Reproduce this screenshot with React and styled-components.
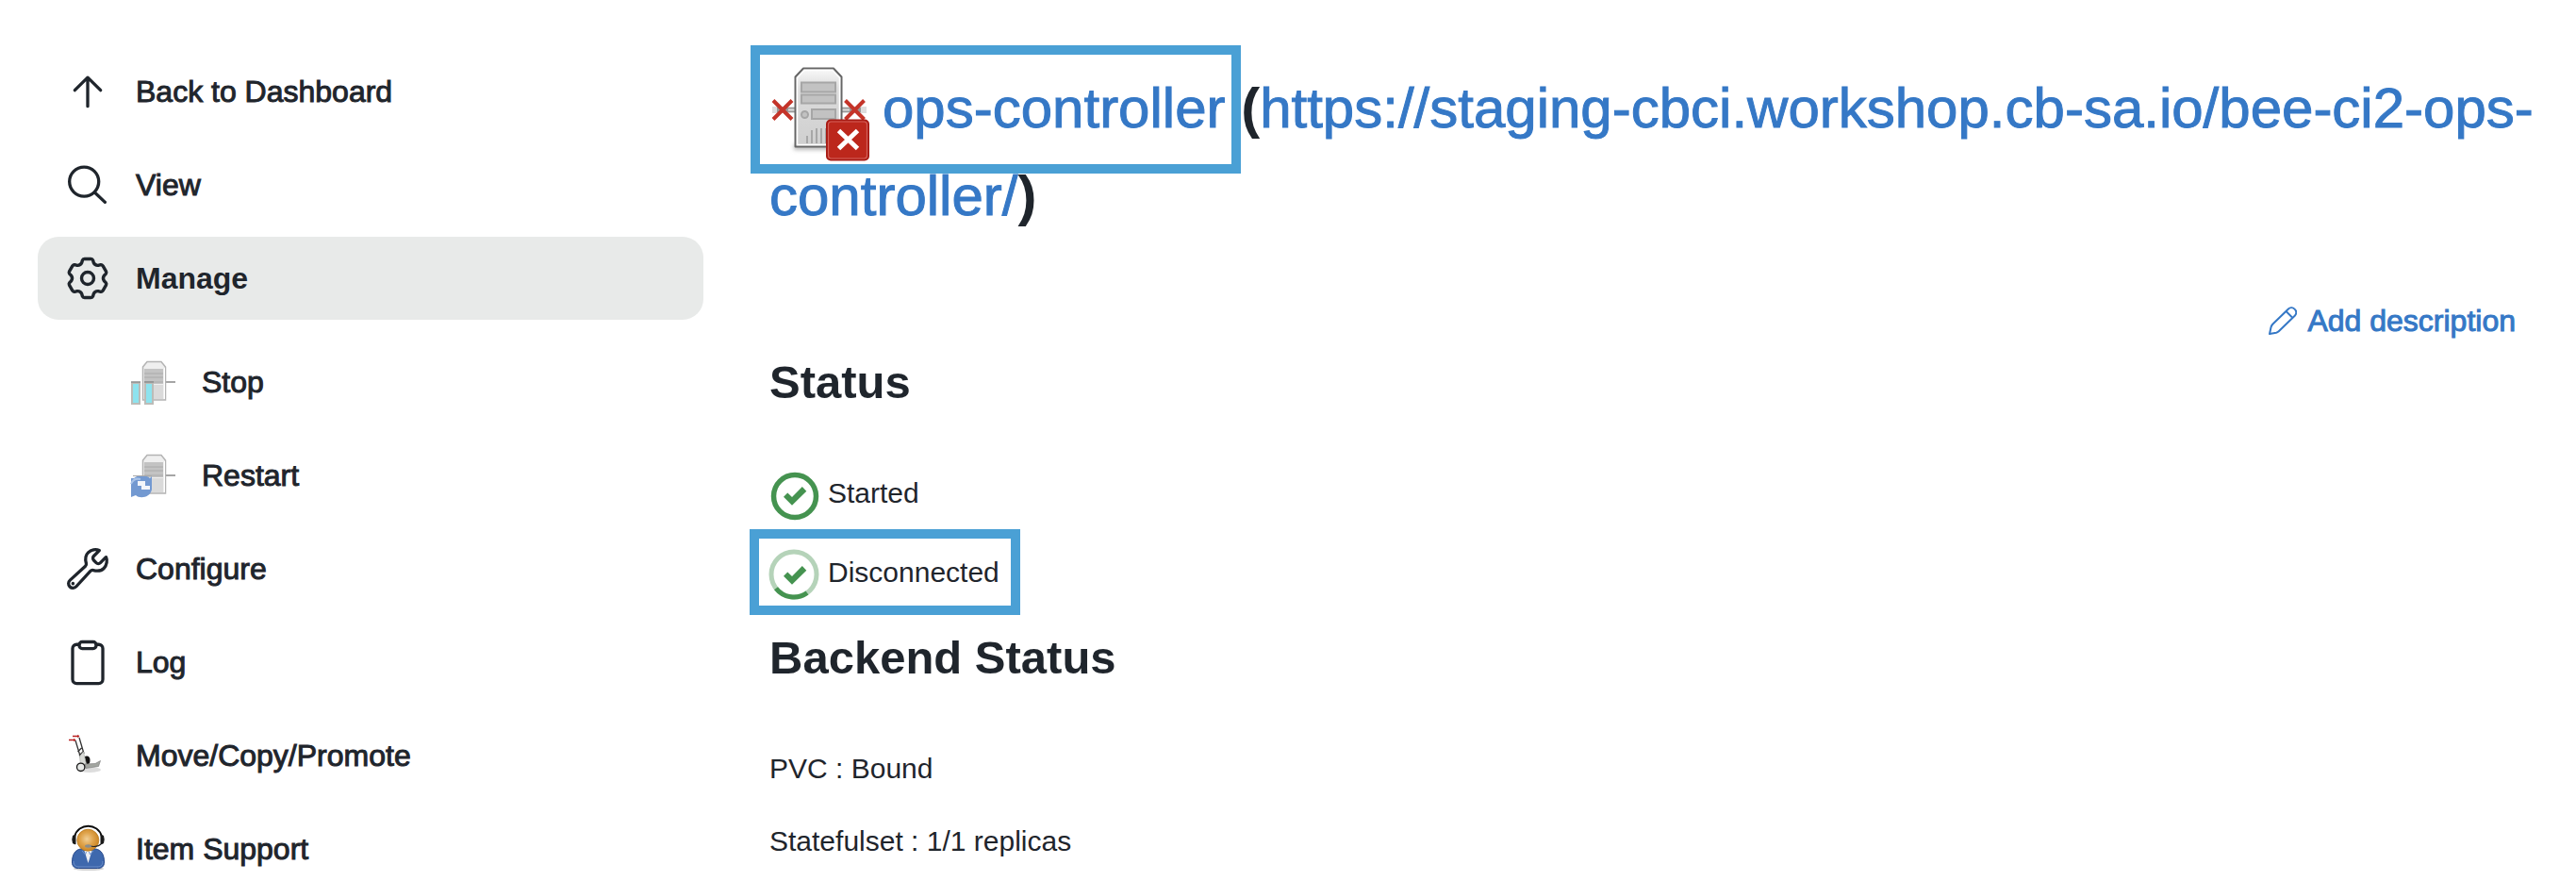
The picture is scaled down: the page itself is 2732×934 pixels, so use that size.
import React from 'react';
import styled, { createGlobalStyle } from 'styled-components';

const ink = '#1f252c';
const link = '#3578c6';
const green = '#459350';
const highlight = '#4aa0d5';

const GlobalStyle = createGlobalStyle`
  *, *::before, *::after { box-sizing: border-box; }
  html { scrollbar-width: none; }
  body {
    margin: 0;
    background: #fff;
    color: ${ink};
    font-family: "Liberation Sans", Arial, sans-serif;
    font-size: 30px;
    line-height: 36px;
  }
  a { color: ${link}; text-decoration: none; }
`;

const Page = styled.div`
  display: flex;
  gap: 70px;
  padding: 0 40px;
`;

const Sidebar = styled.nav`
  flex: 0 0 706px;
  padding-top: 53px;
`;

const TaskList = styled.ul`
  display: flex;
  flex-direction: column;
  gap: 11px;
  margin: 0;
  padding: 0;
  list-style: none;
`;

const SubTaskList = styled(TaskList)`
  padding: 22px 0 0 70px;
`;

const TaskLink = styled.a`
  display: flex;
  align-items: center;
  gap: 26px;
  height: 88px;
  padding: 0 28px;
  border-radius: 22px;
  font-size: 32px;
  color: ${ink};
  background: ${(p) => (p.$active ? '#e8eae9' : 'transparent')};
  font-weight: ${(p) => (p.$active ? 700 : 400)};
  -webkit-text-stroke: ${(p) => (p.$active ? '0' : '1px')} currentColor;
`;

const TaskIcon = styled.svg`
  flex: none;
  width: 50px;
  height: 50px;
  overflow: visible;
`;

const Main = styled.main`
  flex: 1;
  min-width: 0;
  padding: 68px 0 24px;
`;

const Title = styled.h1`
  margin: 0;
  font-size: 60px;
  line-height: 93px;
  font-weight: 700;
  a {
    font-weight: 400;
    -webkit-text-stroke: 1px currentColor;
  }
`;

const TitleIcon = styled.svg`
  width: 106px;
  height: 106px;
  margin: -20px 14px -20px 0;
  vertical-align: middle;
`;

const TitleMark = styled.span`
  position: relative;
  &::after {
    content: '';
    position: absolute;
    inset: -33px -16px -36px -20px;
    border: 10px solid ${highlight};
    pointer-events: none;
  }
`;

const Actions = styled.div`
  display: flex;
  justify-content: flex-end;
  padding: 62px 24px 0 0;
`;

const ActionLink = styled.a`
  display: inline-flex;
  align-items: center;
  gap: 11px;
  height: 48px;
  font-size: 32px;
  -webkit-text-stroke: 1px currentColor;
`;

const SectionTitle = styled.h2`
  margin: ${(p) => p.$top}px 0 0;
  font-size: 49px;
  line-height: 56px;
  font-weight: 700;
`;

const StatusList = styled.ul`
  display: flex;
  flex-direction: column;
  align-items: flex-start;
  gap: 32px;
  margin: 64px 0 0;
  padding: 0;
  list-style: none;
`;

const StatusRow = styled.li`
  position: relative;
  display: flex;
  align-items: center;
  gap: 10px;
  height: 52px;
  svg { width: 52px; height: 52px; overflow: visible; }
  &::after {
    content: '';
    display: ${(p) => (p.$marked ? 'block' : 'none')};
    position: absolute;
    inset: -20px -22px -19px -21px;
    border: 10px solid ${highlight};
    pointer-events: none;
  }
`;

const Details = styled.div`
  display: flex;
  flex-direction: column;
  gap: 41px;
  margin-top: 72px;
  p { margin: 0; }
`;

const LineIcon = ({ children }) => (
  <TaskIcon viewBox="0 0 512 512" fill="none" stroke={ink} strokeWidth="34" strokeLinecap="round" strokeLinejoin="round" aria-hidden="true">
    {children}
  </TaskIcon>
);

const ArrowIcon = () => (
  <LineIcon>
    <path d="M116 242l140-138 140 138M256 112v304" />
  </LineIcon>
);

const SearchIcon = () => (
  <LineIcon>
    <circle cx="217" cy="221" r="159" />
    <path d="M332 338l112 106" />
  </LineIcon>
);

const polar = (angle, radius) => {
  const t = (angle * Math.PI) / 180;
  return `${(25 + radius * Math.cos(t)).toFixed(2)} ${(25 + radius * Math.sin(t)).toFixed(2)}`;
};

const gearPath = [-90, -30, 30, 90, 150, 210]
  .map(
    (a, i) =>
      `${i ? '' : `M${polar(a - 21, 17.6)}`}L${polar(a - 16, 20)}Q${polar(a - 14, 21)} ${polar(a - 9, 20.8)}L${polar(a + 9, 20.8)}Q${polar(a + 14, 21)} ${polar(a + 16, 20)}L${polar(a + 21, 17.6)}Q${polar(a + 30, 15.5)} ${polar(a + 39, 17.6)}`,
  )
  .join('');

const GearIcon = () => (
  <TaskIcon viewBox="0 0 50 50" fill="none" stroke={ink} strokeWidth="3.400" strokeLinejoin="round" aria-hidden="true">
    <path d={`${gearPath}Z`} />
    <circle cx="25" cy="25" r="6.5" />
  </TaskIcon>
);

const WrenchIcon = () => (
  <LineIcon>
    <path d="M393.87 190a32.1 32.1 0 01-45.25 0l-26.57-26.57a32.09 32.09 0 010-45.26L382.19 58a1 1 0 00-.3-1.64c-38.82-16.64-89.15-8.16-121.11 23.57-30.58 30.35-32.32 76-21.12 115.84a31.93 31.93 0 01-9.06 32.08L64 380a48.17 48.17 0 1068 68l153.86-167a31.93 31.93 0 0131.6-9.13c39.54 10.59 84.54 8.6 114.72-21.19 32.49-32 39.5-88.56 23.75-120.93a1 1 0 00-1.6-.26z" />
    <circle cx="96" cy="416" r="18" fill={ink} stroke="none" />
  </LineIcon>
);

const ClipboardIcon = () => (
  <LineIcon>
    <path d="M348 64h28a44 44 0 0144 44v336a44 44 0 01-44 44H136a44 44 0 01-44-44V108a44 44 0 0144-44h28" />
    <rect x="164" y="36" width="184" height="72" rx="32" />
  </LineIcon>
);

const SmallServer = () => (
  <g>
    <path d="M36 25h12" stroke="#a5a5a5" strokeWidth="2" />
    <path d="M13.500 9L18 3.500h15L37.500 9v35h-24z" fill="#efefef" stroke="#b4b4b4" strokeWidth="1.500" />
    <path d="M15 11h20v16H15z" fill="#c3c3c3" />
    <path d="M15 16h20M15 20h20M15 25h20" stroke="#aaa" />
    <path d="M15 28h20v15H15z" fill="#dadada" />
    <path d="M36.500 10v33" stroke="#fff" />
  </g>
);

const StopIcon = () => (
  <TaskIcon viewBox="0 0 50 50" fill="none" aria-hidden="true">
    <SmallServer />
    <path d="M2 26h8v22H2zM16 26h8v22h-8z" fill="#8ee3ee" stroke="#bcbcb8" strokeWidth="2" />
    <path d="M1 25h10M15 25h10" stroke="#8d8d8d" strokeWidth="1.500" />
  </TaskIcon>
);

const RestartIcon = () => (
  <TaskIcon viewBox="0 0 50 50" fill="none" aria-hidden="true">
    <SmallServer />
    <path d="M1 28h3c5-4 14-3 17 0l2-2v14c-2 9-13 10-17 6l-5 2z" fill="#7399d1" />
    <path d="M1 34c2-5 6-6 10-5" stroke="#a9c3e8" strokeWidth="2" />
    <path d="M8 31h8v5h5v4h-9v-4H8z" fill="#f2f5fa" />
    <path d="M3 25.500h20" stroke="#aaa" />
  </TaskIcon>
);

const DollyIcon = () => (
  <TaskIcon viewBox="0 0 50 50" fill="none" aria-hidden="true">
    <ellipse cx="27" cy="40" rx="12" ry="3" fill="#ddd" />
    <path d="M12 9l5.500 18M16 6l5 17M14.500 21l4-4M16 25l4-4" stroke="#333" strokeWidth="1.300" />
    <path d="M5 8.500h7M9 4.500h7" stroke="#b82020" strokeWidth="1.500" />
    <path d="M10 7l2.500 1.500L10 10M14 3l2.500 1.500L14 6" fill="#b82020" />
    <ellipse cx="24" cy="30" rx="3.500" ry="4.500" fill="#111" />
    <path d="M16.500 26l4-5 3 13-6 1z" fill="#d8dad6" stroke="#b2b4b0" strokeWidth=".7" />
    <path d="M22 34l11-.5 5.500-3-2 6L23 38.500z" fill="#a2a5a0" stroke="#777" strokeWidth=".6" />
    <circle cx="17.700" cy="37.300" r="4.200" fill="#e6e8e6" stroke="#161616" strokeWidth="1.300" />
  </TaskIcon>
);

const SupportIcon = () => (
  <TaskIcon viewBox="0 0 50 50" fill="none" aria-hidden="true">
    <defs>
      <radialGradient id="face" cx="45%" cy="45%">
        <stop offset="0" stopColor="#f1cf95" />
        <stop offset=".6" stopColor="#dfa34b" />
        <stop offset="1" stopColor="#d08c2c" />
      </radialGradient>
    </defs>
    <ellipse cx="26" cy="46" rx="16" ry="2" fill="#d3d3d3" />
    <path d="M8.500 39c0-8 3-13 9-14h16c6 1 9 6 9 14 0 5-3 6.500-7 6.500h-20c-4 0-7-1.500-7-6.500z" fill="#3e68ad" stroke="#28498a" />
    <path d="M10 38c0 5 3 6 6 6h19c4 0 6-2 6-6" stroke="#7798ce" strokeWidth=".8" />
    <path d="M21.500 27h8l-4 13z" fill="#eef0f4" />
    <path d="M19 27l3.500 4 1-3M31 27l-3.500 4-1-3" stroke="#6d91cb" />
    <circle cx="25.300" cy="15.700" r="11.500" fill="url(#face)" stroke="#b97919" strokeWidth=".8" />
    <path d="M11 12C15-3 36-3 40 12" stroke="#0c0c0c" strokeWidth="1.800" />
    <path d="M9 11q2-1.500 3.500-1v10q-2 .5-3.500-1-1.500-4 0-8zM42 11q-2-1.500-3.500-1v10q2 .5 3.500-1 1.500-4 0-8z" fill="#1a1a1a" />
    <path d="M27 21.500c3 1.500 9 1.500 12-1.500" stroke="#222" strokeWidth="1.200" />
    <ellipse cx="25.500" cy="22" rx="3.500" ry="1.700" fill="#8a8d8c" />
  </TaskIcon>
);

const ControllerIcon = () => (
  <TitleIcon viewBox="0 0 106 106" fill="none" aria-hidden="true">
    <defs>
      <linearGradient id="case" x1="0" y1="0" x2="0" y2="1">
        <stop offset="0" stopColor="#fafafa" />
        <stop offset=".25" stopColor="#dcdcdc" />
        <stop offset="1" stopColor="#cfcfcf" />
      </linearGradient>
      <filter id="shade" x="-20%" y="-100%" width="140%" height="300%">
        <feGaussianBlur stdDeviation="2" />
      </filter>
    </defs>
    <rect x="26" y="87" width="50" height="6" fill="#bbb" filter="url(#shade)" />
    <path d="M3 50.500h24M77 50.500h26" stroke="#ddd" strokeWidth="7" />
    <path d="M8 50.500h20M77 50.500h20" stroke="#999" strokeWidth="5" />
    <path d="M20 50.500h8M77 50.500h8" stroke="#ddd" strokeWidth="2" />
    <path d="M27.500 15.500L36 6.500h32l8.500 9v74h-49z" fill="url(#case)" stroke="#666" strokeWidth="2" strokeLinejoin="round" />
    <path d="M29.500 16.500l7.500-8h30l7.500 8v71h-45z" stroke="#fff" strokeWidth="1.500" />
    <g fill="#c2c2c2" stroke="#a6a6a6" strokeWidth="2">
      <path d="M34 21.500h36v10H34zM34 34.500h36v9H34zM45 50h25v10H45z" />
      <circle cx="37.500" cy="55.500" r="3.500" />
    </g>
    <path d="M40 78v8M45 72v14M50 70v16M55 70v16M60 70v16" stroke="#999" strokeWidth="1.500" />
    <path d="M4 40.500l20 20M24 40.500l-20 20M80.500 40.500l20 20M100.500 40.500l-20 20" stroke="#c43429" strokeWidth="4" />
    <rect x="61" y="61.500" width="44" height="42" rx="4" fill="#bc271c" stroke="#a81b14" strokeWidth="2" />
    <rect x="62.500" y="63" width="41" height="39" rx="3" stroke="#d4615a" strokeWidth="1.200" />
    <path d="M73.500 72.500l20 19M93.500 72.500l-20 19" stroke="#fff" strokeWidth="5" />
  </TitleIcon>
);

const PencilIcon = () => (
  <svg width="30" height="30" viewBox="0 0 30 30" fill="none" stroke={link} strokeWidth="2" strokeLinejoin="round" aria-hidden="true">
    <path d="M1 29l1.500-7q.5-2 2-3.500L21 2.500c4-4 11 2 7 7L11 26q-1.500 1.500-3 1.800z" />
    <path d="M18.500 5l6.500 6.500" />
  </svg>
);

const Check = () => (
  <path d="M15 29.700l4.300-4.200 4.700 4.500L34.800 19l4.500 4.700L24 38.700z" fill={green} />
);

const StartedIcon = () => (
  <svg viewBox="0 0 52 52" fill="none" aria-hidden="true">
    <circle cx="27" cy="29" r="22.500" stroke={green} strokeWidth="5.500" />
    <Check />
  </svg>
);

const DisconnectedIcon = () => (
  <svg viewBox="0 0 52 52" fill="none" aria-hidden="true">
    <circle cx="26" cy="28" r="24" stroke="#b5d3b9" strokeWidth="5" />
    <path d="M7 42.700A24 24 0 0 0 40 47.500" stroke={green} strokeWidth="5" />
    <Check />
  </svg>
);

const Task = ({ icon: Icon, label, active, children }) => (
  <li>
    <TaskLink href="#" $active={active} aria-current={active ? 'page' : undefined}>
      <Icon />
      <span>{label}</span>
    </TaskLink>
    {children}
  </li>
);

export default function App() {
  return (
    <>
      <GlobalStyle />
      <Page>
        <Sidebar>
          <TaskList>
            <Task icon={ArrowIcon} label="Back to Dashboard" />
            <Task icon={SearchIcon} label="View" />
            <Task icon={GearIcon} label="Manage" active>
              <SubTaskList>
                <Task icon={StopIcon} label="Stop" />
                <Task icon={RestartIcon} label="Restart" />
              </SubTaskList>
            </Task>
            <Task icon={WrenchIcon} label="Configure" />
            <Task icon={ClipboardIcon} label="Log" />
            <Task icon={DollyIcon} label="Move/Copy/Promote" />
            <Task icon={SupportIcon} label="Item Support" />
          </TaskList>
        </Sidebar>
        <Main>
          <Title>
            <TitleMark>
              <ControllerIcon />
              <a href="#">ops-controller</a>
            </TitleMark>{' '}
            (<a href="#">https://staging-cbci.workshop.cb-sa.io/bee-ci2-ops-controller/</a>)
          </Title>
          <Actions>
            <ActionLink href="#">
              <PencilIcon />
              Add description
            </ActionLink>
          </Actions>
          <SectionTitle $top={13}>Status</SectionTitle>
          <StatusList>
            <StatusRow>
              <StartedIcon />
              Started
            </StatusRow>
            <StatusRow $marked>
              <DisconnectedIcon />
              Disconnected
            </StatusRow>
          </StatusList>
          <SectionTitle $top={36}>Backend Status</SectionTitle>
          <Details>
            <p>PVC : Bound</p>
            <p>Statefulset : 1/1 replicas</p>
          </Details>
        </Main>
      </Page>
    </>
  );
}
